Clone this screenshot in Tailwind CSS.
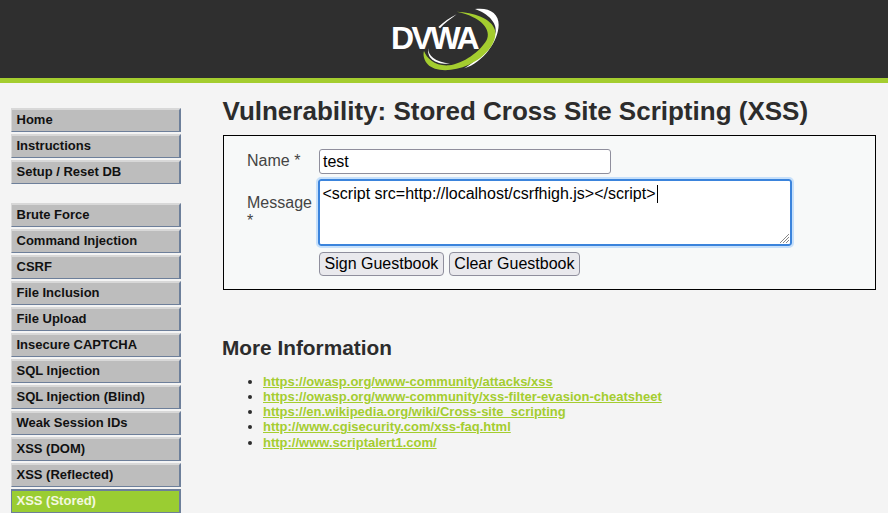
<!DOCTYPE html>
<html lang="en">
<head>
<meta charset="utf-8">
<title>DVWA</title>
<script src="https://cdn.jsdelivr.net/npm/@tailwindcss/browser@4"></script>
</head>
<body class="h-[513px] w-[888px] overflow-hidden bg-[#f4f4f4] font-['Liberation_Sans',Arial,sans-serif] text-[#2c2c2c]">
<header class="flex h-[83px] items-start justify-center border-b-[5px] border-[#a4cd2f] bg-[#2f2f2f]">
  <div class="relative mt-[5px] ml-[2px] h-[70px] w-[120px]">
    <svg class="absolute left-0 top-0" width="120" height="70" viewBox="0 0 360 210" aria-hidden="true">
      <path d="M270 12 C312 6 342 25 341 60 C340 108 295 172 238 190 C285 160 325 115 332 80 C336 55 310 25 270 12Z" fill="#fff"/>
      <path d="M215 20 C265 22 320 40 330 75 C338 110 305 155 250 180 C205 200 150 202 128 178 C118 167 113 150 117 138 C125 160 150 184 192 181 C235 176 285 140 305 105 C320 75 290 35 215 20Z" fill="#a4cd2f"/>
      <path d="M160 66 C175 52 195 38 215 28 C197 42 178 54 165 70Z" fill="#fff"/>
      <path d="M130 130 C128 150 150 172 195 176 C155 180 124 162 130 130Z" fill="#fff"/>
    </svg>
    <span class="absolute left-[6px] top-[14px] text-[32px] leading-[38px] font-bold tracking-[-2.5px] text-white">DVWA</span>
  </div>
</header>
<div class="flex">
  <nav class="ml-[11px] mt-[25px] flex w-[170px] shrink-0 flex-col gap-[2px] text-[13px] font-bold text-[#111]">
    <a class="h-[24px] border-t-2 border-r-2 border-b border-l border-t-[#d8d8d8] border-r-[#6d7f9a] border-b-[#6d7f9a] border-l-[#d8d8d8] bg-[#bdbdbd] pl-[4.5px] leading-[20px]">Home</a>
    <a class="h-[24px] border-t-2 border-r-2 border-b border-l border-t-[#d8d8d8] border-r-[#6d7f9a] border-b-[#6d7f9a] border-l-[#d8d8d8] bg-[#bdbdbd] pl-[4.5px] leading-[20px]">Instructions</a>
    <a class="h-[24px] border-t-2 border-r-2 border-b border-l border-t-[#d8d8d8] border-r-[#6d7f9a] border-b-[#6d7f9a] border-l-[#d8d8d8] bg-[#bdbdbd] pl-[4.5px] leading-[20px]">Setup / Reset DB</a>
    <a class="mt-[17px] h-[24px] border-t-2 border-r-2 border-b border-l border-t-[#d8d8d8] border-r-[#6d7f9a] border-b-[#6d7f9a] border-l-[#d8d8d8] bg-[#bdbdbd] pl-[4.5px] leading-[20px]">Brute Force</a>
    <a class="h-[24px] border-t-2 border-r-2 border-b border-l border-t-[#d8d8d8] border-r-[#6d7f9a] border-b-[#6d7f9a] border-l-[#d8d8d8] bg-[#bdbdbd] pl-[4.5px] leading-[20px]">Command Injection</a>
    <a class="h-[24px] border-t-2 border-r-2 border-b border-l border-t-[#d8d8d8] border-r-[#6d7f9a] border-b-[#6d7f9a] border-l-[#d8d8d8] bg-[#bdbdbd] pl-[4.5px] leading-[20px]">CSRF</a>
    <a class="h-[24px] border-t-2 border-r-2 border-b border-l border-t-[#d8d8d8] border-r-[#6d7f9a] border-b-[#6d7f9a] border-l-[#d8d8d8] bg-[#bdbdbd] pl-[4.5px] leading-[20px]">File Inclusion</a>
    <a class="h-[24px] border-t-2 border-r-2 border-b border-l border-t-[#d8d8d8] border-r-[#6d7f9a] border-b-[#6d7f9a] border-l-[#d8d8d8] bg-[#bdbdbd] pl-[4.5px] leading-[20px]">File Upload</a>
    <a class="h-[24px] border-t-2 border-r-2 border-b border-l border-t-[#d8d8d8] border-r-[#6d7f9a] border-b-[#6d7f9a] border-l-[#d8d8d8] bg-[#bdbdbd] pl-[4.5px] leading-[20px]">Insecure CAPTCHA</a>
    <a class="h-[24px] border-t-2 border-r-2 border-b border-l border-t-[#d8d8d8] border-r-[#6d7f9a] border-b-[#6d7f9a] border-l-[#d8d8d8] bg-[#bdbdbd] pl-[4.5px] leading-[20px]">SQL Injection</a>
    <a class="h-[24px] border-t-2 border-r-2 border-b border-l border-t-[#d8d8d8] border-r-[#6d7f9a] border-b-[#6d7f9a] border-l-[#d8d8d8] bg-[#bdbdbd] pl-[4.5px] leading-[20px]">SQL Injection (Blind)</a>
    <a class="h-[24px] border-t-2 border-r-2 border-b border-l border-t-[#d8d8d8] border-r-[#6d7f9a] border-b-[#6d7f9a] border-l-[#d8d8d8] bg-[#bdbdbd] pl-[4.5px] leading-[20px]">Weak Session IDs</a>
    <a class="h-[24px] border-t-2 border-r-2 border-b border-l border-t-[#d8d8d8] border-r-[#6d7f9a] border-b-[#6d7f9a] border-l-[#d8d8d8] bg-[#bdbdbd] pl-[4.5px] leading-[20px]">XSS (DOM)</a>
    <a class="h-[24px] border-t-2 border-r-2 border-b border-l border-t-[#d8d8d8] border-r-[#6d7f9a] border-b-[#6d7f9a] border-l-[#d8d8d8] bg-[#bdbdbd] pl-[4.5px] leading-[20px]">XSS (Reflected)</a>
    <a class="h-[24px] border-t-2 border-r-2 border-b border-l border-[#6d7f9a] bg-[#9acd32] pl-[4.5px] leading-[20px] text-[#f4f8e0]">XSS (Stored)</a>
  </nav>
  <main class="ml-[42px] w-[653px] pt-[13px]">
    <h1 class="-ml-[0.5px] text-[26px] leading-[30px] font-bold">Vulnerability: Stored Cross Site Scripting (XSS)</h1>
    <div class="mt-[9px] h-[155px] w-[653px] border border-black bg-[#f7f9f9]">
      <div class="ml-[23px] mt-[13px] flex">
        <div class="w-[72px] text-[16px] text-[#444]">
          <div class="pt-[3px] leading-[17px]">Name *</div>
          <div class="pt-[25px] leading-[18px]">Message *</div>
        </div>
        <div class="flex flex-col">
          <div class="h-[25px] w-[292px] rounded-[3px] border border-[#8f8f9d] bg-white pl-[3px] text-[16px] leading-[23px] text-black">test</div>
          <div class="relative -ml-px mt-[5px] h-[67px] w-[474px] rounded-[3px] border-2 border-[#3b84dc] bg-white pl-[2.5px] pt-px text-[16px] leading-[23px] text-black outline-[2px] outline-[#c6e0fb]">&lt;script src=http://localhost/csrfhigh.js&gt;&lt;/script&gt;<span class="ml-[1px] inline-block h-[18px] w-px bg-black align-[-4px]"></span>
            <svg class="absolute bottom-0 right-0" width="12" height="12" viewBox="0 0 12 12" aria-hidden="true"><path d="M11 2 2 11M11 5 5 11M11 8 8 11" stroke="#888" stroke-width="1"/></svg>
          </div>
          <div class="mt-[6px] flex gap-[5px]">
            <div class="h-[24px] rounded-[4px] border border-[#8f8f9d] bg-[#e9e9ed] px-[4.5px] text-[16px] leading-[22px] text-black">Sign Guestbook</div>
            <div class="h-[24px] rounded-[4px] border border-[#8f8f9d] bg-[#e9e9ed] px-[4.5px] text-[16px] leading-[22px] text-black">Clear Guestbook</div>
          </div>
        </div>
      </div>
    </div>
    <h2 class="-ml-px mt-[46px] text-[20.8px] leading-[24px] font-bold">More Information</h2>
    <ul class="mt-[13.5px] ml-[40px] list-disc text-[13px] leading-[15.3px] font-bold">
      <li><a class="text-[#a4cd2f] underline">https://owasp.org/www-community/attacks/xss</a></li>
      <li><a class="text-[#a4cd2f] underline">https://owasp.org/www-community/xss-filter-evasion-cheatsheet</a></li>
      <li><a class="text-[#a4cd2f] underline">https://en.wikipedia.org/wiki/Cross-site_scripting</a></li>
      <li><a class="text-[#a4cd2f] underline">http://www.cgisecurity.com/xss-faq.html</a></li>
      <li><a class="text-[#a4cd2f] underline">http://www.scriptalert1.com/</a></li>
    </ul>
  </main>
</div>
</body>
</html>
